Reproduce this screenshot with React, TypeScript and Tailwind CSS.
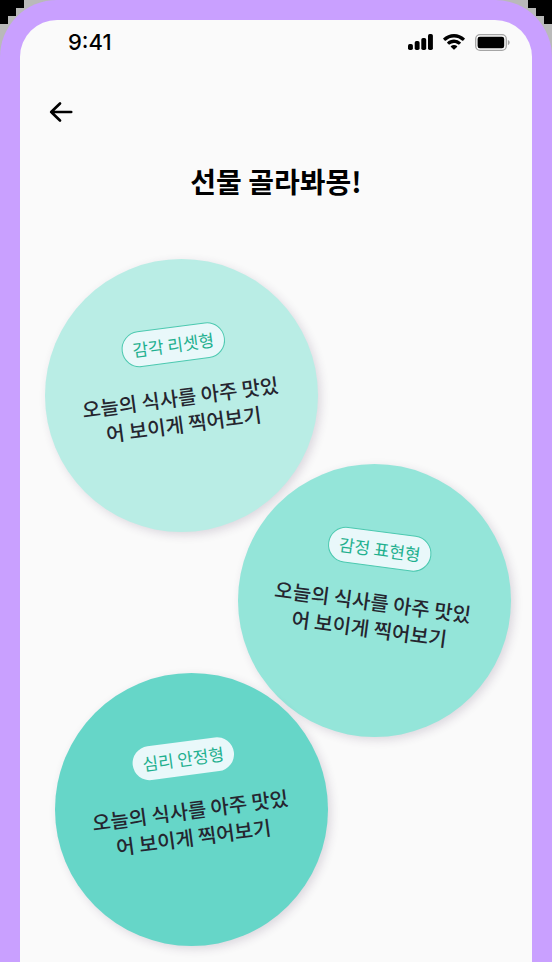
type Mission = {
  id: string;
  kind: string;
  text: string;
  place: string;
  tilt: string;
  badge: string;
};

const missions: Mission[] = [
  {
    id: "reset",
    kind: "감각 리셋형",
    text: "오늘의 식사를 아주 맛있어 보이게 찍어보기",
    place: "ml-[25px] self-start bg-[#b9ede5]",
    tilt: "-rotate-[7.5deg]",
    badge: "border border-[#4cc9b0]",
  },
  {
    id: "express",
    kind: "감정 표현형",
    text: "오늘의 식사를 아주 맛있어 보이게 찍어보기",
    place: "mr-[21px] -mt-[68px] self-end bg-[#94e5d9]",
    tilt: "rotate-[7.5deg]",
    badge: "border border-[#4cc9b0]",
  },
  {
    id: "calm",
    kind: "심리 안정형",
    text: "오늘의 식사를 아주 맛있어 보이게 찍어보기",
    place: "ml-[35px] -mt-16 self-start bg-[#66d6c8]",
    tilt: "-rotate-[7.5deg]",
    badge: "",
  },
];

function StatusBar() {
  return (
    <div className="flex h-11 items-center justify-between pr-[22px] pl-12">
      <span className="font-[Inter,sans-serif] text-[22px] leading-none font-medium">9:41</span>
      <div className="flex items-center gap-2.5">
        <svg width="25" height="16" viewBox="0 0 25 16" aria-hidden="true">
          <rect x="0" y="10" width="4.900" height="6" rx="1.700" />
          <rect x="6.700" y="7" width="4.900" height="9" rx="1.700" />
          <rect x="13.300" y="4" width="4.900" height="12" rx="1.700" />
          <rect x="20" y="0" width="4.900" height="16" rx="1.700" />
        </svg>
        <svg width="22" height="16" viewBox="0 0 22 16" aria-hidden="true">
          <path d="M11 0C6.900 0 3.100 1.600.3 4.300a.6.600 0 0 0 0 .8l1.600 1.600c.2.2.6.2.8 0C4.900 4.600 7.800 3.400 11 3.400s6.100 1.200 8.300 3.300c.2.2.6.2.8 0l1.600-1.600a.6.600 0 0 0 0-.8C18.900 1.600 15.100 0 11 0Z" />
          <path d="M11 5.500c-2.600 0-5 1-6.800 2.700a.6.600 0 0 0 0 .8l1.600 1.600c.2.2.6.2.8 0A6.400 6.400 0 0 1 11 8.900c1.700 0 3.200.6 4.400 1.700.2.200.6.2.8 0L17.800 9a.6.600 0 0 0 0-.8A9.800 9.800 0 0 0 11 5.500Z" />
          <path d="M11 11c-1.200 0-2.200.4-3 1.100a.5.500 0 0 0 0 .8l2.600 2.600c.2.2.6.2.8 0l2.600-2.600a.5.500 0 0 0 0-.8c-.8-.7-1.800-1.100-3-1.100Z" />
        </svg>
        <svg width="35" height="17" viewBox="0 0 35 17" aria-hidden="true">
          <rect x="0.700" y="0.700" width="30.600" height="15.600" rx="4.300" fill="none" stroke="#a5a5a5" strokeWidth="1.300" />
          <rect x="2.600" y="2.700" width="26.600" height="11.600" rx="2.200" />
          <path d="M32.900 5.900v5.200c1-.4 1.800-1.400 1.800-2.600s-.8-2.200-1.800-2.600Z" fill="#a5a5a5" />
        </svg>
      </div>
    </div>
  );
}

function MissionCircle({ mission }: { mission: Mission }) {
  return (
    <button
      type="button"
      className={`flex size-[273px] shrink-0 items-center justify-center rounded-full shadow-[3px_3px_10px_rgba(60,40,80,0.16)] ${mission.place}`}
    >
      <span className={`flex flex-col items-center gap-[21px] pr-1 pb-7 ${mission.tilt}`}>
        <span
          className={`rounded-full bg-[#e9f8fa] px-2.5 py-1 text-[17px] leading-[26px] text-[#1fb08f] ${mission.badge}`}
        >
          {mission.kind}
        </span>
        <span className="w-[204px] text-center text-[20px] leading-[27px] font-medium break-all text-[#25252f]">
          {mission.text}
        </span>
      </span>
    </button>
  );
}

export default function App() {
  return (
    <div className="relative isolate min-h-screen bg-[#b9b9b9] font-['Noto_Sans_CJK_KR',sans-serif] text-black">
      <svg className="absolute top-0 left-0 -z-10" width="24" height="24" viewBox="0 0 24 24" aria-hidden="true">
        <path d="M0 0h24v8h-8v8H8v8H0Z" />
      </svg>
      <svg className="absolute top-0 right-0 -z-10" width="24" height="24" viewBox="0 0 24 24" aria-hidden="true">
        <path d="M24 0H0v8h8v8h8v8h8Z" />
      </svg>
      <div className="flex min-h-screen flex-col rounded-t-[57px] bg-[#c9a0ff] px-5 pt-5">
        <main className="flex grow flex-col rounded-t-[37px] bg-[#fafafa] pb-4">
          <StatusBar />
          <button type="button" aria-label="뒤로" className="mt-8 ml-7 flex size-8 items-center">
            <svg width="26" height="24" viewBox="0 0 26 24" fill="none" stroke="black" strokeWidth="2.700" strokeLinecap="round" strokeLinejoin="round" aria-hidden="true">
              <path d="M12 3.500 3.200 12l8.800 8.500M3.200 12h20" />
            </svg>
          </button>
          <h1 className="mt-[33px] text-center text-[28px] leading-10 font-bold">선물 골라봐몽!</h1>
          <section className="mt-[58px] flex flex-col">
            {missions.map((mission) => (
              <MissionCircle key={mission.id} mission={mission} />
            ))}
          </section>
        </main>
      </div>
    </div>
  );
}
